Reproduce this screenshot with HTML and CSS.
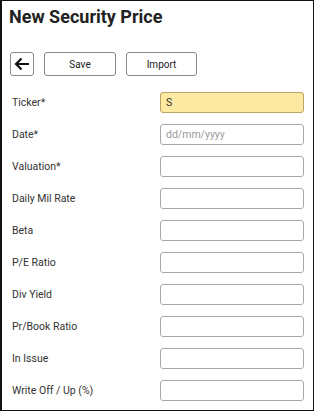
FILE: index.html
```html
<!DOCTYPE html>
<html>
<head>
<meta charset="utf-8">
<link rel="stylesheet" href="styles.css">
</head>
<body>
<div class="panel">
  <h1 class="title">New Security Price</h1>
  <div class="toolbar">
    <button class="btn btn-back" aria-label="Back">
      <svg width="16" height="14" viewBox="0 0 16 14"><path d="M15 7H2.5M7.5 1.5L2 7l5.5 5.5" fill="none" stroke="#111" stroke-width="2.2"/></svg>
    </button>
    <button class="btn btn-save">Save</button>
    <button class="btn btn-import">Import</button>
  </div>
  <div class="form">
    <div class="row"><label class="label">Ticker*</label><div class="input input-active">S</div></div>
    <div class="row"><label class="label">Date*</label><div class="input placeholder">dd/mm/yyyy</div></div>
    <div class="row"><label class="label">Valuation*</label><div class="input"></div></div>
    <div class="row"><label class="label">Daily Mil Rate</label><div class="input"></div></div>
    <div class="row"><label class="label">Beta</label><div class="input"></div></div>
    <div class="row"><label class="label">P/E Ratio</label><div class="input"></div></div>
    <div class="row"><label class="label">Div Yield</label><div class="input"></div></div>
    <div class="row"><label class="label">Pr/Book Ratio</label><div class="input"></div></div>
    <div class="row"><label class="label">In Issue</label><div class="input"></div></div>
    <div class="row"><label class="label">Write Off / Up (%)</label><div class="input"></div></div>
  </div>
</div>
</body>
</html>
```
FILE: styles.css
```css
html, body {
  margin: 0;
  padding: 0;
  background: #fff;
}
.panel {
  box-sizing: border-box;
  width: 314px;
  height: 411px;
  border: 1px solid #111;
  border-left-width: 2px;
  font-family: Roboto, "Liberation Sans", sans-serif;
  color: #333;
}
.title {
  margin: 0;
  padding: 5px 0 0 7px;
  font-family: Roboto, "Liberation Sans", sans-serif;
  font-size: 18px;
  font-weight: 700;
  line-height: 22px;
  color: #222;
}
.toolbar {
  display: flex;
  gap: 10px;
  margin-top: 24px;
  padding-left: 8px;
}
.btn {
  box-sizing: border-box;
  height: 24px;
  border: 1px solid #8a8a8a;
  border-radius: 3px;
  background: #fff;
  font-family: Roboto, "Liberation Sans", sans-serif;
  font-size: 10px;
  color: #222;
  padding: 0;
  display: flex;
  align-items: center;
  justify-content: center;
}
.btn-back {
  width: 24px;
}
.btn-save {
  width: 72px;
}
.btn-import {
  width: 71px;
}
.form {
  display: flex;
  flex-direction: column;
  gap: 11px;
  margin-top: 16px;
  padding-left: 10px;
}
.row {
  display: flex;
  align-items: center;
  height: 21px;
}
.label {
  width: 148px;
  font-size: 10.5px;
  color: #333;
}
.input {
  box-sizing: border-box;
  width: 144px;
  height: 21px;
  border: 1px solid #a9a9a9;
  border-radius: 3px;
  background: #fff;
  font-size: 10.5px;
  line-height: 19px;
  padding-left: 5px;
  color: #333;
}
.input-active {
  background: #fde9a2;
  border-color: #b9a46a;
}
.placeholder {
  color: #9a9a9a;
}
```
